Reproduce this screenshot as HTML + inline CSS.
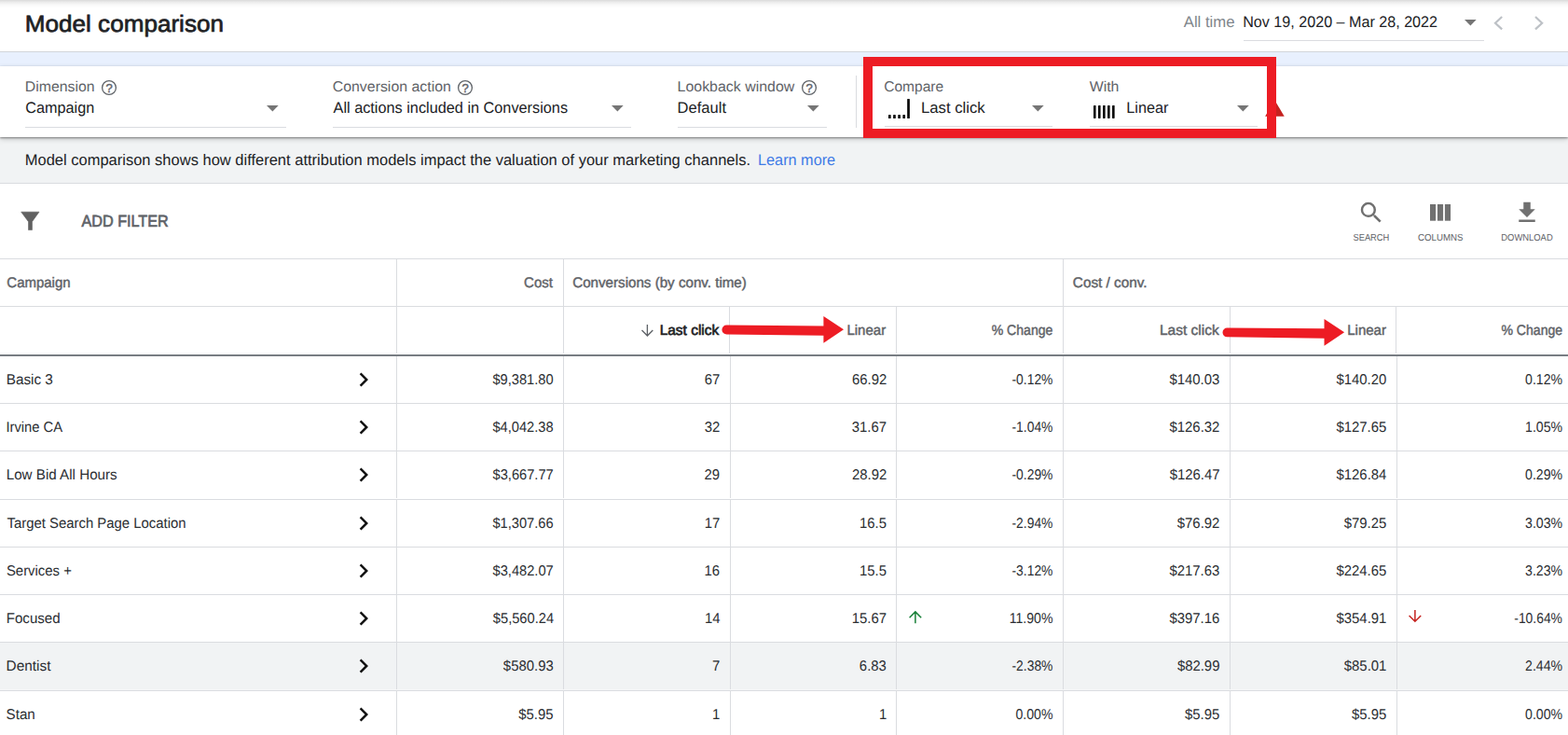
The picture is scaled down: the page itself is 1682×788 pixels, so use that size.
<!DOCTYPE html>
<html lang="en">
<head>
<meta charset="utf-8">
<title>Model comparison</title>
<style>
html,body{margin:0;padding:0}
body{width:1682px;height:788px;position:relative;overflow:hidden;background:#fff;font-family:"Liberation Sans", Arial, sans-serif;color:#3c4043;text-rendering:geometricPrecision}
.t{position:absolute;left:0;white-space:nowrap;line-height:1;margin:0;padding:0;font-weight:400;text-decoration:none;transform-origin:0 0}
.a{position:absolute}
svg{position:absolute;overflow:visible}
</style>
</head>
<body>
<header class="page-header">
<div class="a top-shadow" style="left:0px;top:0px;width:1682px;height:9px;background:linear-gradient(to bottom,rgba(0,0,0,.145),rgba(0,0,0,.08) 25%,rgba(0,0,0,.035) 50%,rgba(0,0,0,.012) 75%,rgba(0,0,0,0));"></div>
<h1 class="t title" style="top:14px;font-size:25px;color:#202124;-webkit-text-stroke:0.7px #202124;transform:translateX(26.83px) scaleX(1.0434);">Model comparison</h1>
<div class="date-range">
<span class="t preset" style="top:16px;font-size:16.7px;color:#80868b;transform:translateX(1269.75px) scaleX(1.0014);">All time</span>
<span class="t dates" style="top:16px;font-size:16.7px;color:#202124;transform:translateX(1333.22px) scaleX(0.9658);">Nov 19, 2020 – Mar 28, 2022</span>
<div class="a underline" style="left:1334px;top:43px;width:258px;height:1px;background:#dadce0;"></div>
<svg class="caret" style="left:1571.35px;top:20.7px" width="12.7" height="6.6" viewBox="0 0 12.7 6.6"><path d="M0 0h12.7L6.35 6.6z" fill="#757575"/></svg>
<svg class="nav" style="left:1603.5px;top:18.3px" width="7.2" height="13.4" viewBox="0 0 7.2 13.4"><path d="M7.2 0L0 6.7L7.2 13.4" fill="none" stroke="#bdc1c6" stroke-width="2.2"/></svg>
<svg class="nav" style="left:1647.3px;top:18.3px" width="7.2" height="13.4" viewBox="0 0 7.2 13.4"><path d="M0 0L7.2 6.7L0 13.4" fill="none" stroke="#bdc1c6" stroke-width="2.2"/></svg>
</div>
</header>
<div class="a band" style="left:0px;top:55px;width:1682px;height:16px;background:#e8f0fe;border-top:1px solid #d2d5da;box-sizing:border-box;"></div>
<section class="info-bar">
<div class="a" style="left:0px;top:147px;width:1682px;height:49px;background:#f1f3f4;"></div>
<div class="a" style="left:0px;top:196px;width:1682px;height:1px;background:#dadce0;"></div>
<p class="t" style="top:164px;font-size:16.7px;color:#202124;transform:translateX(26.75px) scaleX(0.9886);">Model comparison shows how different attribution models impact the valuation of your marketing channels.</p>
<a class="t link" style="top:164px;font-size:16.7px;color:#3f7ae6;transform:translateX(813.05px) scaleX(0.9732);">Learn more</a>
</section>
<section class="filter-bar">
<div class="a" style="left:0px;top:71px;width:1682px;height:76px;background:#fff;box-shadow:0 1px 2px rgba(0,0,0,.40),0 2px 6px rgba(0,0,0,.20);"></div>
<div class="field">
<label class="t" style="top:86px;font-size:15.6px;color:#5f6368;transform:translateX(26.85px) scaleX(1.0157);">Dimension</label>
<svg class="help" style="left:107.9px;top:85.2px" width="18" height="18" viewBox="0 0 18 18"><circle cx="9" cy="9" r="7.4" fill="none" stroke="#5f6368" stroke-width="1.3"/><text x="9" y="13.5" text-anchor="middle" font-family="Liberation Sans, Arial, sans-serif" font-size="13" stroke="#5f6368" stroke-width="0.45" fill="#5f6368">?</text></svg>
<span class="t value" style="top:108px;font-size:16.7px;color:#202124;transform:translateX(27.29px) scaleX(0.9721);">Campaign</span>
<div class="a underline" style="left:27px;top:136px;width:280px;height:1px;background:#dadce0;"></div>
<svg class="caret" style="left:285.9px;top:113px" width="12.7" height="6.6" viewBox="0 0 12.7 6.6"><path d="M0 0h12.7L6.35 6.6z" fill="#757575"/></svg>
</div>
<div class="field">
<label class="t" style="top:86px;font-size:15.6px;color:#5f6368;transform:translateX(356.71px) scaleX(1.0189);">Conversion action</label>
<svg class="help" style="left:490px;top:85.2px" width="18" height="18" viewBox="0 0 18 18"><circle cx="9" cy="9" r="7.4" fill="none" stroke="#5f6368" stroke-width="1.3"/><text x="9" y="13.5" text-anchor="middle" font-family="Liberation Sans, Arial, sans-serif" font-size="13" stroke="#5f6368" stroke-width="0.45" fill="#5f6368">?</text></svg>
<span class="t value" style="top:108px;font-size:16.7px;color:#202124;transform:translateX(357.53px) scaleX(0.9753);">All actions included in Conversions</span>
<div class="a underline" style="left:357px;top:136px;width:320px;height:1px;background:#dadce0;"></div>
<svg class="caret" style="left:655.65px;top:113px" width="12.7" height="6.6" viewBox="0 0 12.7 6.6"><path d="M0 0h12.7L6.35 6.6z" fill="#757575"/></svg>
</div>
<div class="field">
<label class="t" style="top:86px;font-size:15.6px;color:#5f6368;transform:translateX(726.62px) scaleX(1.0204);">Lookback window</label>
<svg class="help" style="left:859.3px;top:85.2px" width="18" height="18" viewBox="0 0 18 18"><circle cx="9" cy="9" r="7.4" fill="none" stroke="#5f6368" stroke-width="1.3"/><text x="9" y="13.5" text-anchor="middle" font-family="Liberation Sans, Arial, sans-serif" font-size="13" stroke="#5f6368" stroke-width="0.45" fill="#5f6368">?</text></svg>
<span class="t value" style="top:108px;font-size:16.7px;color:#202124;transform:translateX(726.60px) scaleX(0.9908);">Default</span>
<div class="a underline" style="left:727px;top:136px;width:160px;height:1px;background:#dadce0;"></div>
<svg class="caret" style="left:865.65px;top:113px" width="12.7" height="6.6" viewBox="0 0 12.7 6.6"><path d="M0 0h12.7L6.35 6.6z" fill="#757575"/></svg>
</div>
<div class="a sep" style="left:918px;top:81px;width:1px;height:56px;background:#dadce0;"></div>
<div class="field">
<label class="t" style="top:86px;font-size:15.6px;color:#5f6368;transform:translateX(948.17px) scaleX(0.9967);">Compare</label>
<svg class="model-icon" style="left:952.55px;top:106.1px" width="23" height="21.1" viewBox="0 0 23 21.1"><rect x="0" y="17.1" width="2.65" height="4" rx="0.6" fill="#000"/><rect x="5.14" y="17.1" width="2.65" height="4" rx="0.6" fill="#000"/><rect x="10.28" y="17.1" width="2.65" height="4" rx="0.6" fill="#000"/><rect x="15.42" y="17.1" width="2.65" height="4" rx="0.6" fill="#000"/><rect x="20.2" y="0" width="2.65" height="21.1" rx="0.6" fill="#000"/></svg>
<span class="t value" style="top:108px;font-size:16.7px;color:#202124;transform:translateX(988.04px) scaleX(1.0005);">Last click</span>
<div class="a underline" style="left:949px;top:135px;width:180px;height:1px;background:#dadce0;"></div>
<svg class="caret" style="left:1107.15px;top:113px" width="12.7" height="6.6" viewBox="0 0 12.7 6.6"><path d="M0 0h12.7L6.35 6.6z" fill="#757575"/></svg>
</div>
<div class="field">
<label class="t" style="top:86px;font-size:15.6px;color:#5f6368;transform:translateX(1168.70px) scaleX(1.0182);">With</label>
<svg class="model-icon" style="left:1172.75px;top:113.3px" width="23" height="13.9" viewBox="0 0 23 13.9"><rect x="0" y="0" width="2.55" height="13.9" rx="0.6" fill="#000"/><rect x="5.02" y="0" width="2.55" height="13.9" rx="0.6" fill="#000"/><rect x="10.04" y="0" width="2.55" height="13.9" rx="0.6" fill="#000"/><rect x="15.06" y="0" width="2.55" height="13.9" rx="0.6" fill="#000"/><rect x="20.08" y="0" width="2.55" height="13.9" rx="0.6" fill="#000"/></svg>
<span class="t value" style="top:108px;font-size:16.7px;color:#202124;transform:translateX(1208.31px) scaleX(0.9713);">Linear</span>
<div class="a underline" style="left:1169px;top:135px;width:180px;height:1px;background:#dadce0;"></div>
<svg class="caret" style="left:1327.05px;top:113px" width="12.7" height="6.6" viewBox="0 0 12.7 6.6"><path d="M0 0h12.7L6.35 6.6z" fill="#757575"/></svg>
</div>
<svg class="warn" style="left:0;top:0" width="1682" height="160" viewBox="0 0 1682 160"><path d="M1367.4 107.4L1377.7 124.75H1357.1z" fill="#c5221f"/></svg>
</section>
<section class="toolbar">
<div class="add-filter">
<svg class="icon" style="left:0;top:0" width="60" height="260" viewBox="0 0 60 260"><path fill="#616161" stroke="#616161" stroke-width="0.6" stroke-linejoin="round" d="M22.7 227.2H42L34.45 237.7V246.55H30.5V237.7z"/></svg>
<span class="t" style="top:229px;font-size:17.8px;color:#5f6368;-webkit-text-stroke:0.7px #5f6368;transform:translateX(87.39px) scaleX(0.9118);">ADD FILTER</span>
</div>
<div class="tool">
<svg class="icon" style="left:1456.3px;top:213.2px" width="30" height="30" viewBox="0 0 24 24"><path fill="#707070" d="M15.5 14h-.79l-.28-.27A6.471 6.471 0 0 0 16 9.5 6.5 6.5 0 1 0 9.5 16c1.61 0 3.09-.59 4.23-1.57l.27.28v.79l5 4.99L20.49 19l-4.99-5zm-6 0C7.01 14 5 11.99 5 9.5S7.01 5 9.5 5 14 7.01 14 9.5 11.99 14 9.5 14z"/></svg>
<span class="t" style="top:251px;font-size:10.2px;color:#5f6368;transform:translateX(1451.47px) scaleX(0.9144);">SEARCH</span>
</div>
<div class="tool">
<svg class="icon" style="left:1534px;top:219.1px" width="22" height="17.7" viewBox="0 0 22 17.7"><rect x="0" y="0" width="6.15" height="17.7" fill="#707070"/><rect x="7.95" y="0" width="6.15" height="17.7" fill="#707070"/><rect x="15.9" y="0" width="6.15" height="17.7" fill="#707070"/></svg>
<span class="t" style="top:251px;font-size:10.2px;color:#5f6368;transform:translateX(1521.07px) scaleX(0.9502);">COLUMNS</span>
</div>
<div class="tool">
<svg class="icon" style="left:1623.05px;top:213.15px" width="30" height="30" viewBox="0 0 24 24"><path fill="#707070" d="M19 9h-4V3H9v6H5l7 7 7-7zM5 18v2h14v-2H5z"/></svg>
<span class="t" style="top:251px;font-size:10.2px;color:#5f6368;transform:translateX(1610.31px) scaleX(0.9229);">DOWNLOAD</span>
</div>
</section>
<div class="table" role="table">
<div class="thead" role="rowgroup">
<div class="tr" role="row">
<div class="t" role="columnheader" style="top:296px;font-size:15.3px;color:#5f6368;-webkit-text-stroke:0.45px #5f6368;transform:translateX(7.36px) scaleX(0.9784);">Campaign</div>
<div class="t" role="columnheader" style="top:296px;font-size:15.3px;color:#5f6368;-webkit-text-stroke:0.45px #5f6368;transform:translateX(562.07px) scaleX(0.9789);">Cost</div>
<div class="t" role="columnheader" style="top:296px;font-size:15.3px;color:#5f6368;-webkit-text-stroke:0.45px #5f6368;transform:translateX(614.25px) scaleX(0.9902);">Conversions (by conv. time)</div>
<div class="t" role="columnheader" style="top:296px;font-size:15.3px;color:#5f6368;-webkit-text-stroke:0.45px #5f6368;transform:translateX(1150.86px) scaleX(1.0008);">Cost / conv.</div>
</div>
<div class="tr" role="row">
<svg class="sort" style="left:687.5px;top:348.4px" width="12.8" height="13" viewBox="0 0 12.8 13"><path d="M6.4 0V12M0.5 6.1L6.4 12L12.3 6.1" fill="none" stroke="#5f6368" stroke-width="1.35"/></svg>
<div class="t sorted" role="columnheader" style="top:347px;font-size:15.3px;color:#202124;-webkit-text-stroke:0.65px #202124;transform:translateX(707.68px) scaleX(1.0102);">Last click</div>
<div class="t" role="columnheader" style="top:347px;font-size:15.3px;color:#5f6368;-webkit-text-stroke:0.45px #5f6368;transform:translateX(908.44px) scaleX(0.9811);">Linear</div>
<div class="t" role="columnheader" style="top:347px;font-size:15.3px;color:#5f6368;-webkit-text-stroke:0.45px #5f6368;transform:translateX(1063.71px) scaleX(0.9194);">% Change</div>
<div class="t" role="columnheader" style="top:347px;font-size:15.3px;color:#5f6368;-webkit-text-stroke:0.45px #5f6368;transform:translateX(1243.89px) scaleX(1.0133);">Last click</div>
<div class="t" role="columnheader" style="top:347px;font-size:15.3px;color:#5f6368;-webkit-text-stroke:0.45px #5f6368;transform:translateX(1445.21px) scaleX(0.9821);">Linear</div>
<div class="t" role="columnheader" style="top:347px;font-size:15.3px;color:#5f6368;-webkit-text-stroke:0.45px #5f6368;transform:translateX(1610.46px) scaleX(0.9188);">% Change</div>
</div>
</div>
<div class="tbody" role="rowgroup">
<div class="tr" role="row">
<div class="t name" role="cell" style="top:400px;font-size:15.6px;color:#2b2e32;transform:translateX(6.68px) scaleX(0.9814);">Basic 3</div>
<svg class="expand" style="left:374.8px;top:392.1px" width="30" height="30" viewBox="0 0 24 24"><path fill="#111" d="M10 6L8.59 7.41 13.17 12l-4.58 4.59L10 18l6-6z"/></svg>
<div class="t num" role="cell" style="top:400px;font-size:15.6px;color:#2b2e32;transform:translateX(528.38px) scaleX(0.9400);">$9,381.80</div>
<div class="t num" role="cell" style="top:400px;font-size:15.6px;color:#2b2e32;transform:translateX(755.66px) scaleX(0.9550);">67</div>
<div class="t num" role="cell" style="top:400px;font-size:15.6px;color:#2b2e32;transform:translateX(914.00px) scaleX(0.9550);">66.92</div>
<div class="t num" role="cell" style="top:400px;font-size:15.6px;color:#2b2e32;transform:translateX(1085.49px) scaleX(0.8900);">-0.12%</div>
<div class="t num" role="cell" style="top:400px;font-size:15.6px;color:#2b2e32;transform:translateX(1254.44px) scaleX(0.9550);">$140.03</div>
<div class="t num" role="cell" style="top:400px;font-size:15.6px;color:#2b2e32;transform:translateX(1433.48px) scaleX(0.9550);">$140.20</div>
<div class="t num" role="cell" style="top:400px;font-size:15.6px;color:#2b2e32;transform:translateX(1636.06px) scaleX(0.9050);">0.12%</div>
</div>
<div class="tr" role="row">
<div class="t name" role="cell" style="top:451px;font-size:15.6px;color:#2b2e32;transform:translateX(6.41px) scaleX(0.9444);">Irvine CA</div>
<svg class="expand" style="left:374.8px;top:443.1px" width="30" height="30" viewBox="0 0 24 24"><path fill="#111" d="M10 6L8.59 7.41 13.17 12l-4.58 4.59L10 18l6-6z"/></svg>
<div class="t num" role="cell" style="top:451px;font-size:15.6px;color:#2b2e32;transform:translateX(528.40px) scaleX(0.9400);">$4,042.38</div>
<div class="t num" role="cell" style="top:451px;font-size:15.6px;color:#2b2e32;transform:translateX(755.64px) scaleX(0.9550);">32</div>
<div class="t num" role="cell" style="top:451px;font-size:15.6px;color:#2b2e32;transform:translateX(913.80px) scaleX(0.9550);">31.67</div>
<div class="t num" role="cell" style="top:451px;font-size:15.6px;color:#2b2e32;transform:translateX(1085.49px) scaleX(0.8900);">-1.04%</div>
<div class="t num" role="cell" style="top:451px;font-size:15.6px;color:#2b2e32;transform:translateX(1254.52px) scaleX(0.9550);">$126.32</div>
<div class="t num" role="cell" style="top:451px;font-size:15.6px;color:#2b2e32;transform:translateX(1433.49px) scaleX(0.9550);">$127.65</div>
<div class="t num" role="cell" style="top:451px;font-size:15.6px;color:#2b2e32;transform:translateX(1636.06px) scaleX(0.9050);">1.05%</div>
</div>
<div class="tr" role="row">
<div class="t name" role="cell" style="top:502px;font-size:15.6px;color:#2b2e32;transform:translateX(6.69px) scaleX(0.9739);">Low Bid All Hours</div>
<svg class="expand" style="left:374.8px;top:494.1px" width="30" height="30" viewBox="0 0 24 24"><path fill="#111" d="M10 6L8.59 7.41 13.17 12l-4.58 4.59L10 18l6-6z"/></svg>
<div class="t num" role="cell" style="top:502px;font-size:15.6px;color:#2b2e32;transform:translateX(528.54px) scaleX(0.9400);">$3,667.77</div>
<div class="t num" role="cell" style="top:502px;font-size:15.6px;color:#2b2e32;transform:translateX(755.47px) scaleX(0.9550);">29</div>
<div class="t num" role="cell" style="top:502px;font-size:15.6px;color:#2b2e32;transform:translateX(914.00px) scaleX(0.9550);">28.92</div>
<div class="t num" role="cell" style="top:502px;font-size:15.6px;color:#2b2e32;transform:translateX(1085.49px) scaleX(0.8900);">-0.29%</div>
<div class="t num" role="cell" style="top:502px;font-size:15.6px;color:#2b2e32;transform:translateX(1254.65px) scaleX(0.9550);">$126.47</div>
<div class="t num" role="cell" style="top:502px;font-size:15.6px;color:#2b2e32;transform:translateX(1433.52px) scaleX(0.9550);">$126.84</div>
<div class="t num" role="cell" style="top:502px;font-size:15.6px;color:#2b2e32;transform:translateX(1636.06px) scaleX(0.9050);">0.29%</div>
</div>
<div class="tr" role="row">
<div class="t name" role="cell" style="top:554px;font-size:15.6px;color:#2b2e32;transform:translateX(7.49px) scaleX(0.9547);">Target Search Page Location</div>
<svg class="expand" style="left:374.8px;top:546.1px" width="30" height="30" viewBox="0 0 24 24"><path fill="#111" d="M10 6L8.59 7.41 13.17 12l-4.58 4.59L10 18l6-6z"/></svg>
<div class="t num" role="cell" style="top:554px;font-size:15.6px;color:#2b2e32;transform:translateX(528.40px) scaleX(0.9400);">$1,307.66</div>
<div class="t num" role="cell" style="top:554px;font-size:15.6px;color:#2b2e32;transform:translateX(755.66px) scaleX(0.9550);">17</div>
<div class="t num" role="cell" style="top:554px;font-size:15.6px;color:#2b2e32;transform:translateX(922.02px) scaleX(0.9550);">16.5</div>
<div class="t num" role="cell" style="top:554px;font-size:15.6px;color:#2b2e32;transform:translateX(1085.49px) scaleX(0.8900);">-2.94%</div>
<div class="t num" role="cell" style="top:554px;font-size:15.6px;color:#2b2e32;transform:translateX(1262.80px) scaleX(0.9550);">$76.92</div>
<div class="t num" role="cell" style="top:554px;font-size:15.6px;color:#2b2e32;transform:translateX(1441.77px) scaleX(0.9550);">$79.25</div>
<div class="t num" role="cell" style="top:554px;font-size:15.6px;color:#2b2e32;transform:translateX(1636.06px) scaleX(0.9050);">3.03%</div>
</div>
<div class="tr" role="row">
<div class="t name" role="cell" style="top:605px;font-size:15.6px;color:#2b2e32;transform:translateX(6.92px) scaleX(0.9554);">Services +</div>
<svg class="expand" style="left:374.8px;top:597.1px" width="30" height="30" viewBox="0 0 24 24"><path fill="#111" d="M10 6L8.59 7.41 13.17 12l-4.58 4.59L10 18l6-6z"/></svg>
<div class="t num" role="cell" style="top:605px;font-size:15.6px;color:#2b2e32;transform:translateX(528.54px) scaleX(0.9400);">$3,482.07</div>
<div class="t num" role="cell" style="top:605px;font-size:15.6px;color:#2b2e32;transform:translateX(755.59px) scaleX(0.9550);">16</div>
<div class="t num" role="cell" style="top:605px;font-size:15.6px;color:#2b2e32;transform:translateX(922.02px) scaleX(0.9550);">15.5</div>
<div class="t num" role="cell" style="top:605px;font-size:15.6px;color:#2b2e32;transform:translateX(1085.49px) scaleX(0.8900);">-3.12%</div>
<div class="t num" role="cell" style="top:605px;font-size:15.6px;color:#2b2e32;transform:translateX(1254.44px) scaleX(0.9550);">$217.63</div>
<div class="t num" role="cell" style="top:605px;font-size:15.6px;color:#2b2e32;transform:translateX(1433.49px) scaleX(0.9550);">$224.65</div>
<div class="t num" role="cell" style="top:605px;font-size:15.6px;color:#2b2e32;transform:translateX(1636.06px) scaleX(0.9050);">3.23%</div>
</div>
<div class="tr" role="row">
<div class="t name" role="cell" style="top:656px;font-size:15.6px;color:#2b2e32;transform:translateX(6.69px) scaleX(0.9691);">Focused</div>
<svg class="expand" style="left:374.8px;top:648.1px" width="30" height="30" viewBox="0 0 24 24"><path fill="#111" d="M10 6L8.59 7.41 13.17 12l-4.58 4.59L10 18l6-6z"/></svg>
<div class="t num" role="cell" style="top:656px;font-size:15.6px;color:#2b2e32;transform:translateX(528.83px) scaleX(0.9400);">$5,560.24</div>
<div class="t num" role="cell" style="top:656px;font-size:15.6px;color:#2b2e32;transform:translateX(756.06px) scaleX(0.9550);">14</div>
<div class="t num" role="cell" style="top:656px;font-size:15.6px;color:#2b2e32;transform:translateX(913.80px) scaleX(0.9550);">15.67</div>
<svg class="trend up" style="left:975.1px;top:654.5px" width="13.8" height="13.2" viewBox="0 0 13.8 13.2"><path d="M6.9 13.2V1M0.6 7.2L6.9 0.9L13.2 7.2" fill="none" stroke="#188038" stroke-width="1.5"/></svg>
<div class="t num" role="cell" style="top:656px;font-size:15.6px;color:#2b2e32;transform:translateX(1082.68px) scaleX(0.9050);">11.90%</div>
<div class="t num" role="cell" style="top:656px;font-size:15.6px;color:#2b2e32;transform:translateX(1254.45px) scaleX(0.9550);">$397.16</div>
<div class="t num" role="cell" style="top:656px;font-size:15.6px;color:#2b2e32;transform:translateX(1433.52px) scaleX(0.9550);">$354.91</div>
<svg class="trend down" style="left:1511.1px;top:653.9px" width="13.8" height="13.2" viewBox="0 0 13.8 13.2"><path d="M6.9 0V12.2M0.6 6L6.9 12.3L13.2 6" fill="none" stroke="#c5221f" stroke-width="1.5"/></svg>
<div class="t num" role="cell" style="top:656px;font-size:15.6px;color:#2b2e32;transform:translateX(1624.26px) scaleX(0.8900);">-10.64%</div>
</div>
<div class="tr hover" role="row">
<div class="a row-bg" style="left:0px;top:689px;width:1682px;height:51px;background:#f1f3f4;"></div>
<div class="t name" role="cell" style="top:707px;font-size:15.6px;color:#2b2e32;transform:translateX(6.62px) scaleX(0.9855);">Dentist</div>
<svg class="expand" style="left:374.8px;top:699.1px" width="30" height="30" viewBox="0 0 24 24"><path fill="#111" d="M10 6L8.59 7.41 13.17 12l-4.58 4.59L10 18l6-6z"/></svg>
<div class="t num" role="cell" style="top:707px;font-size:15.6px;color:#2b2e32;transform:translateX(539.87px) scaleX(0.9550);">$580.93</div>
<div class="t num" role="cell" style="top:707px;font-size:15.6px;color:#2b2e32;transform:translateX(763.94px) scaleX(0.9550);">7</div>
<div class="t num" role="cell" style="top:707px;font-size:15.6px;color:#2b2e32;transform:translateX(921.86px) scaleX(0.9550);">6.83</div>
<div class="t num" role="cell" style="top:707px;font-size:15.6px;color:#2b2e32;transform:translateX(1085.49px) scaleX(0.8900);">-2.38%</div>
<div class="t num" role="cell" style="top:707px;font-size:15.6px;color:#2b2e32;transform:translateX(1262.88px) scaleX(0.9550);">$82.99</div>
<div class="t num" role="cell" style="top:707px;font-size:15.6px;color:#2b2e32;transform:translateX(1441.80px) scaleX(0.9550);">$85.01</div>
<div class="t num" role="cell" style="top:707px;font-size:15.6px;color:#2b2e32;transform:translateX(1636.06px) scaleX(0.9050);">2.44%</div>
</div>
<div class="tr" role="row">
<div class="t name" role="cell" style="top:759px;font-size:15.6px;color:#2b2e32;transform:translateX(6.56px) scaleX(0.9743);">Stan</div>
<svg class="expand" style="left:374.8px;top:751.1px" width="30" height="30" viewBox="0 0 24 24"><path fill="#111" d="M10 6L8.59 7.41 13.17 12l-4.58 4.59L10 18l6-6z"/></svg>
<div class="t num" role="cell" style="top:759px;font-size:15.6px;color:#2b2e32;transform:translateX(556.27px) scaleX(0.9550);">$5.95</div>
<div class="t num" role="cell" style="top:759px;font-size:15.6px;color:#2b2e32;transform:translateX(763.93px) scaleX(0.9550);">1</div>
<div class="t num" role="cell" style="top:759px;font-size:15.6px;color:#2b2e32;transform:translateX(942.98px) scaleX(0.9550);">1</div>
<div class="t num" role="cell" style="top:759px;font-size:15.6px;color:#2b2e32;transform:translateX(1089.48px) scaleX(0.9050);">0.00%</div>
<div class="t num" role="cell" style="top:759px;font-size:15.6px;color:#2b2e32;transform:translateX(1271.05px) scaleX(0.9550);">$5.95</div>
<div class="t num" role="cell" style="top:759px;font-size:15.6px;color:#2b2e32;transform:translateX(1450.05px) scaleX(0.9550);">$5.95</div>
<div class="t num" role="cell" style="top:759px;font-size:15.6px;color:#2b2e32;transform:translateX(1636.06px) scaleX(0.9050);">0.00%</div>
</div>
</div>
<div class="grid" aria-hidden="true">
<div class="a" style="left:0px;top:277px;width:1682px;height:1px;background:#dadce0;"></div>
<div class="a" style="left:0px;top:328px;width:1682px;height:1px;background:#dadce0;"></div>
<div class="a" style="left:0px;top:432px;width:1682px;height:1px;background:#dadce0;"></div>
<div class="a" style="left:0px;top:483px;width:1682px;height:1px;background:#dadce0;"></div>
<div class="a" style="left:0px;top:535px;width:1682px;height:1px;background:#dadce0;"></div>
<div class="a" style="left:0px;top:586px;width:1682px;height:1px;background:#dadce0;"></div>
<div class="a" style="left:0px;top:637px;width:1682px;height:1px;background:#dadce0;"></div>
<div class="a" style="left:0px;top:688px;width:1682px;height:1px;background:#dadce0;"></div>
<div class="a" style="left:0px;top:740px;width:1682px;height:1px;background:#dadce0;"></div>
<div class="a" style="left:425px;top:278px;width:1px;height:101px;background:#dadce0;"></div>
<div class="a" style="left:604px;top:278px;width:1px;height:101px;background:#dadce0;"></div>
<div class="a" style="left:1140px;top:278px;width:1px;height:101px;background:#dadce0;"></div>
<div class="a" style="left:782px;top:329px;width:1px;height:50px;background:#dadce0;"></div>
<div class="a" style="left:961px;top:329px;width:1px;height:50px;background:#dadce0;"></div>
<div class="a" style="left:1319px;top:329px;width:1px;height:50px;background:#dadce0;"></div>
<div class="a" style="left:1497px;top:329px;width:1px;height:50px;background:#dadce0;"></div>
<div class="a" style="left:425px;top:382px;width:1px;height:406px;background:#dadce0;"></div>
<div class="a" style="left:604px;top:382px;width:1px;height:406px;background:#dadce0;"></div>
<div class="a" style="left:783px;top:382px;width:1px;height:406px;background:#dadce0;"></div>
<div class="a" style="left:961px;top:382px;width:1px;height:406px;background:#dadce0;"></div>
<div class="a" style="left:1140px;top:382px;width:1px;height:406px;background:#dadce0;"></div>
<div class="a" style="left:1319px;top:382px;width:1px;height:406px;background:#dadce0;"></div>
<div class="a" style="left:1498px;top:382px;width:1px;height:406px;background:#dadce0;"></div>
<div class="a" style="left:0px;top:534px;width:1682px;height:1px;background:#fff;"></div>
<div class="a" style="left:0px;top:739px;width:1682px;height:1px;background:#f5f6f7;"></div>
<div class="a" style="left:0px;top:380px;width:1682px;height:2px;background:#787d83;"></div>
</div>
</div>
<div class="annotations" aria-hidden="true">
<div class="a highlight" style="left:926px;top:61px;width:443px;height:87px;box-sizing:border-box;border:10px solid #ed1c24"></div>
<svg class="arrow" style="left:0;top:0" width="1682" height="788" viewBox="0 0 1682 788"><path d="M779.45 348.5 L883.4 349.4 L883.4 339 L905 353.2 L883.4 367.7 L883.4 359.7 L779.45 358.6 A5.05 5.05 0 0 1 779.45 348.5Z" fill="#ed1c24"/></svg>
<svg class="arrow" style="left:0;top:0" width="1682" height="788" viewBox="0 0 1682 788"><path d="M1316.35 351.6 L1420.5 352.2 L1420.5 342.1 L1442.1 356.2 L1420.5 370.8 L1420.5 362.7 L1316.35 361.3 A4.85 4.85 0 0 1 1316.35 351.6Z" fill="#ed1c24"/></svg>
</div>
</body>
</html>
